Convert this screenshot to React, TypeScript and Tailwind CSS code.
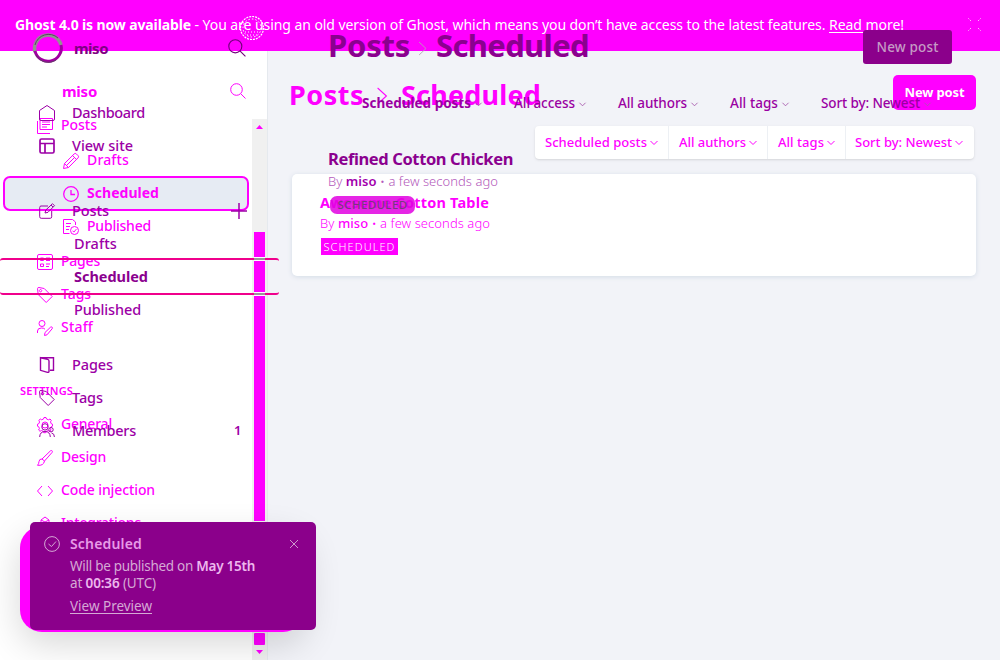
import React, { useLayoutEffect, useRef, useState } from "react";

// Text run whose tracking is adjusted so that it fills a given advance width.
function T({ w, className = "", children }: { w: number; className?: string; children: React.ReactNode }) {
  const ref = useRef<HTMLSpanElement>(null);
  const [track, setTrack] = useState(0);
  useLayoutEffect(() => {
    const el = ref.current;
    if (!el) return;
    el.style.letterSpacing = "0px";
    const natural = el.getBoundingClientRect().width;
    const value = (w - natural) / (el.textContent || " ").length;
    el.style.letterSpacing = value + "px";
    setTrack(value);
  }, [w]);
  return (
    <span ref={ref} className={"inline-block shrink-0 whitespace-pre leading-none " + className} style={{ letterSpacing: track }}>
      {children}
    </span>
  );
}

const paths: Record<string, React.ReactNode> = {
  homeFull: <path d="M.5 5.500 8 .5l7.500 5V14q0 1.500-1.500 1.500H2Q.5 15.500.5 14z" />,
  layout: <path d="M1 2.500Q1 1 2.500 1h11Q15 1 15 2.500v11q0 1.500-1.500 1.500h-11Q1 15 1 13.500zM1 5.500h14M6 5.500V15" strokeWidth="1.700" />,
  compose: <path d="M9 3H2Q.7 3 .7 4.500v9.200q0 1.600 1.500 1.600h9q1.500 0 1.500-1.500V8M6 10l.8-3L13.500.7l2 2L9 9.300zM12 2l2 2" />,
  posts: <path d="M3 .5h12.500v11H3zM.5 3v12.500H13M5 4h8M5 6.500h8M5 9h5" />,
  pencil: <path d="m.5 15.500 1-5L11.200.9q1-1 2.100 0l1.800 1.800q1 1 0 2.100L5.500 14.500zM1.500 10.500l4 4M9.500 2.500l4 4M3.500 12.500l8-8" />,
  clock: <path d="M8 .7a7.300 7.300 0 1 0 0 14.600A7.300 7.300 0 0 0 8 .7M8 4v4.500h4" strokeWidth="1.300" />,
  published: <path d="M6.500 14.500h-6V.5h9L12.500 3v3M3 4.500h5M3 7.500h4M3 10.500h3M11.500 7.500a4 4 0 1 0 0 8 4 4 0 0 0 0-8m-2 4.200 1.400 1.400 2.500-3" />,
  pages: <path d="M2 .5h12q1.500 0 1.500 1.500v12q0 1.500-1.500 1.500H2Q.5 15.500.5 14V2Q.5.500 2 .5M3.500 4h3v2.500h-3zM9 4h4M9 6.500h4M3.500 10h3v2.500h-3zM9 10h4M9 12.500h3" />,
  tag: <path d="m.5 1.500.7 6 8 8 6-6-8-8-5.200-1Q.500.500.5 1.500m3 1a1.200 1.200 0 1 0 .1 0" />,
  staff: <path d="M5 .5a3 3 0 1 0 0 6 3 3 0 0 0 0-6M.5 13V11q0-3 4-3 2.500 0 3.500 1.200M7.500 15.500l.5-3 5.500-5.300q.8-.7 1.600 0 .8.8 0 1.600L10 14.800z" />,
  book: <path d="M1.500.7h13v12.600h-3.500M1.500.7v12.600l7 2q1.500.300 1.500-1V4q0-1.200-1.500-1.600z" strokeWidth="1.400" />,
  gear: <path d="m6.500 2 .5-1.500h2L9.500 2l2 .8L13 2l1.300 1.400-.8 1.500.7 1.800 1.300.5v2l-1.400.6-.8 1.800.8 1.500-1.500 1.300-1.400-.8-2 .8-.5 1.300h-2l-.5-1.400-1.700-.8-1.500.8L1.600 13l.8-1.500-.7-1.800-1.200-.5v-2l1.400-.6.7-1.700L1.800 3.400 3.300 2l1.400.8zM8 5a3 3 0 1 0 0 6 3 3 0 0 0 0-6" />,
  members: <path d="M6 .7a3.200 3.200 0 1 0 0 6.400 3.200 3.200 0 0 0 0-6.400M.7 14q.2-5.500 5.300-5.500t5.300 5.500M12 4.500a2.200 2.200 0 1 1 0 4.400 2.200 2.200 0 0 1 0-4.400M12.500 10q3 .5 2.900 4" />,
  brush: <path d="M5 9 13.500.8q1-.6 1.600 0 .6.7 0 1.600L7.500 11zM5 9q-2.700-.2-3 2.500-.1 2.500-1.500 3.800Q6.500 16 7.500 11" />,
  code: <path d="M5 3 .5 8 5 13M11 3l4.500 5L11 13" />,
  plugin: <path d="M4 15V4l4-3 4 3v11M4 4l4 2 4-2M8 6v9" />,
  search: <path d="M6.500.7a5.800 5.800 0 1 0 0 11.600 5.800 5.800 0 0 0 0-11.600M10.800 10.800l4.700 4.700" />,
  plus: <path d="M8 0v16M0 8h16" strokeWidth="1.500" />,
  close: <path d="m0 0 16 16M16 0 0 16" strokeWidth="1.800" />,
  check: <path d="M8 .6a7.400 7.400 0 1 0 0 14.800A7.400 7.400 0 0 0 8 .6M4.500 8l3 2.500 4.500-5" />,
  down: <path d="m1 4 7 7 7-7" strokeWidth="2" />,
  right: <path d="m3 0 10 8-10 8" strokeWidth="1.200" />,
};

function Icon({ n, className = "size-4" }: { n: string; className?: string }) {
  return (
    <svg viewBox="0 0 16 16" preserveAspectRatio="none" fill="none" stroke="currentColor" strokeWidth="1" className={"shrink-0 overflow-visible " + className}>
      {paths[n]}
    </svg>
  );
}

function Item({ icon, w, label, className }: { icon: string; w: number; label: string; className: string }) {
  return (
    <div className={"flex shrink-0 items-center gap-2 " + className}>
      <Icon n={icon} />
      <T w={w} className="-mt-[2px]">{label}</T>
    </div>
  );
}

function LayerItem({ icon, w, label, className = "" }: { icon: string; w: number; label: string; className?: string }) {
  return (
    <div className={"flex h-[33px] shrink-0 items-center gap-[17px] pl-[39px] pt-px " + className}>
      <Icon n={icon} />
      <T w={w} className="-mt-px">{label}</T>
    </div>
  );
}

function Banner() {
  return (
    <header className="flex h-[51px] shrink-0 items-center bg-[#ff00ff] pb-[2px] pl-[15px] pr-[19px] text-[14px] text-white">
      <T w={176} className="font-bold">Ghost 4.0 is now available</T>
      <T w={638}>{" - You are using an old version of Ghost, which means you don’t have access to the latest features. "}</T>
      <T w={75} className="underline underline-offset-2">Read more!</T>
      <svg viewBox="0 0 13 13" className="ml-auto size-[13px] stroke-white" strokeWidth="1" strokeDasharray="1 1.500">
        <path d="m.5.500 3 3m9-3-3 3m-9 9 3-3m9 3-3-3" />
      </svg>
    </header>
  );
}

function Sidebar() {
  return (
    <aside className="flex w-[268px] shrink-0 flex-col overflow-hidden border-r border-[#e5e9ee] bg-white text-[14px] font-medium text-[#ff00ff]">
      <div className="flex h-[58px] shrink-0 items-center justify-between pl-[62px] pr-[21px] pt-[22px]">
        <T w={35} className="text-[15px] font-bold">miso</T>
        <Icon n="search" />
      </div>
      <div className="flex min-h-0 flex-1">
        <nav className="flex w-[252px] shrink-0 flex-col overflow-hidden">
          <Item icon="posts" label="Posts" w={36} className="h-[33px] pl-[37px]" />
          <Item icon="pencil" label="Drafts" w={42} className="h-[34px] pl-[63px] pt-[3px]" />
          <Item icon="clock" label="Scheduled" w={72} className="ml-[3px] mr-[3px] h-[35px] rounded-[7px] border-2 border-[#ff00ff] bg-[#e6ebf3] pl-[58px] font-bold" />
          <Item icon="published" label="Published" w={64} className="h-8 pl-[63px]" />
          <Item icon="pages" label="Pages" w={39} className="h-9 pl-[37px] pt-px" />
          <Item icon="tag" label="Tags" w={30} className="h-[31px] pl-[37px]" />
          <Item icon="staff" label="Staff" w={32} className="h-[34px] pl-[37px] pt-px" />
          <div className="flex h-16 shrink-0 items-center pl-[20px] pt-[28px] text-[11px] font-semibold">
            <T w={53}>SETTINGS</T>
          </div>
          <Item icon="gear" label="General" w={51} className="h-[33px] pl-[37px]" />
          <Item icon="brush" label="Design" w={45} className="h-[33px] pl-[37px]" />
          <Item icon="code" label="Code injection" w={94} className="h-[33px] pl-[37px]" />
          <Item icon="plugin" label="Integrations" w={80} className="h-[33px] pl-[37px]" />
        </nav>
        <div className="mt-[10px] flex w-[15px] flex-col items-center bg-[#f0f0f0]">
          <svg viewBox="0 0 7 4" className="mt-[6px] h-1 w-[7px] fill-[#ff00ff]"><path d="M0 4 3.500 0 7 4z" /></svg>
          <div className="mt-[103px] h-[289px] w-[11px] bg-[#ff00ff]" />
          <div className="mt-[112px] h-3 w-[11px] rounded-[1px] bg-[#ff00ff]" />
          <svg viewBox="0 0 7 4" className="mt-[5px] h-1 w-[7px] fill-[#ff00ff]"><path d="M0 0h7L3.500 4z" /></svg>
        </div>
      </div>
    </aside>
  );
}

function Filter({ label, w, className }: { label: string; w: number; className: string }) {
  return (
    <div className={"flex items-center border-[#edf0f4] " + className}>
      <T w={w} className="mr-[3px]">{label}</T>
      <Icon n="down" className="size-2" />
    </div>
  );
}

function Posts() {
  return (
    <main className="flex min-w-0 flex-1 flex-col bg-[#f2f3f8] pl-6 pr-6 text-[#ff00ff]">
      <div className="flex h-[83px] items-center pt-[6px]">
        <div className="-ml-[3px] -mt-[2px] flex items-center text-[27px] font-bold">
          <T w={75}>Posts</T>
          <Icon n="right" className="ml-[11px] mr-[12px] mt-[2px] h-4 w-[14px]" />
          <T w={140}>Scheduled</T>
        </div>
        <div className="ml-auto -mt-[6px] flex h-[35px] w-[83px] items-center justify-center rounded-[5px] bg-[#ff00ff] pb-px text-[13px] font-bold text-white">
          <T w={60}>New post</T>
        </div>
      </div>
      <div className="-mt-[8px] mr-[2px] flex h-[33px] w-[439px] self-end rounded-[4px] bg-white text-[13px] font-medium shadow-sm">
        <Filter label="Scheduled posts" w={102} className="w-[134px] border-r pl-[10px]" />
        <Filter label="All authors" w={67} className="w-[99px] border-r pl-[10px]" />
        <Filter label="All tags" w={46} className="w-[78px] border-r pl-[10px]" />
        <Filter label="Sort by: Newest" w={97} className="flex-1 pl-[9px]" />
      </div>
      <article className="mt-[15px] flex h-[102px] flex-col items-start rounded-[5px] bg-white pl-7 pt-[21px] shadow-[0_1px_5px_#d3dce6]">
        <T w={169} className="text-[14.500px] font-bold">Awesome Cotton Table</T>
        <T w={170} className="mt-[7px] text-[13px] font-light">By <b className="font-medium">miso</b> • a few seconds ago</T>
        <div className="ml-px mt-[8px] flex h-[17px] w-[77px] items-center justify-center bg-[#ff00ff] text-[11px] font-light text-white">
          <T w={72}>SCHEDULED</T>
        </div>
      </article>
    </main>
  );
}

function NavLayer() {
  return (
    <div className="flex w-[268px] shrink-0 flex-col text-[14.500px] font-medium text-[#9c00a6]">
      <div className="flex h-[96px] shrink-0 items-center pl-[32px] pr-[22px]">
        <svg viewBox="0 0 32 32" className="size-8" fill="none">
          <path d="M3 20A13.300 13.300 0 0 1 29 13" stroke="#929292" strokeWidth="3.500" />
          <path d="M3 19a13.300 13.300 0 0 0 26-6" stroke="#a000a0" strokeWidth="3" />
          <path d="M3 13A14 14 0 0 1 26 6M4 23a14 14 0 0 0 20 5" stroke="#5f3d65" strokeWidth="1" />
        </svg>
        <T w={34} className="ml-[10px] mt-px text-[15px] font-bold text-[#810084]">miso</T>
        <Icon n="search" className="ml-auto size-[18px] text-[#72007b]" />
      </div>
      <LayerItem icon="homeFull" label="Dashboard" w={73} />
      <LayerItem icon="layout" label="View site" w={61} />
      <div className="mt-8 flex h-[33px] shrink-0 items-center pr-[21px]">
        <LayerItem icon="compose" label="Posts" w={37} />
        <Icon n="plus" className="ml-auto size-4" />
      </div>
      <div className="flex h-[33px] shrink-0 items-center pl-[74px]"><T w={43}>Drafts</T></div>
      <div className="relative -mb-[2px] -mt-[2px] flex h-[37px] w-[279px] shrink-0 items-center rounded-[3px] border-y-2 border-[#f0008c] pl-[74px] font-bold text-[#8b008f]">
        <T w={74}>Scheduled</T>
        <span className="absolute -top-[3px] left-[254px] h-1 w-[11px] border-y border-white bg-[#999]" />
        <span className="absolute -bottom-[3px] left-[254px] h-1 w-[11px] border-y border-white bg-[#999]" />
      </div>
      <div className="flex h-[33px] shrink-0 items-center pl-[74px]"><T w={67}>Published</T></div>
      <LayerItem icon="book" label="Pages" w={41} className="mt-[22px]" />
      <LayerItem icon="tag" label="Tags" w={31} />
      <div className="flex h-[33px] shrink-0 items-center pr-[26px]">
        <LayerItem icon="members" label="Members" w={64} />
        <T w={8} className="ml-auto text-[13px] font-semibold">1</T>
      </div>
    </div>
  );
}

function LayerFilter({ label, w, className }: { label: string; w: number; className: string }) {
  return (
    <div className={"flex shrink-0 items-center gap-[5px] " + className}>
      <T w={w}>{label}</T>
      <Icon n="down" className="-ml-px size-[7px] text-[#a657ac]" />
    </div>
  );
}

function PostsLayer() {
  return (
    <div className="flex min-w-0 flex-1 flex-col text-[#9a00a2]">
      <div className="flex h-[94px] shrink-0 items-center pl-[60px] pr-12">
        <div className="-mt-[3px] flex items-center text-[31px] font-bold text-[#8b008f]">
          <T w={82}>Posts</T>
          <Icon n="right" className="ml-[7px] mr-[8px] mt-[5px] h-[13px] w-[11px] text-[#b3a0b5]" />
          <T w={153}>Scheduled</T>
        </div>
        <div className="ml-auto flex h-[34px] w-[89px] items-center justify-center rounded-[3px] bg-[#8b008b] text-[13.500px] font-medium text-[#c59bc5]">
          <T w={62} className="mt-px">New post</T>
        </div>
      </div>
      <div className="flex h-[20px] shrink-0 items-center pl-[94px] text-[13.500px] font-medium">
        <LayerFilter label="Scheduled posts" w={109} className="w-[152px] font-bold" />
        <LayerFilter label="All access" w={61} className="w-[104px]" />
        <LayerFilter label="All authors" w={69} className="w-[112px]" />
        <LayerFilter label="All tags" w={48} className="w-[91px]" />
        <LayerFilter label="Sort by: Newest" w={99} className="w-[112px]" />
      </div>
      <div className="flex flex-col items-start pl-[60px] pt-[37px]">
        <T w={185} className="text-[16.500px] font-bold text-[#8b008f]">Refined Cotton Chicken</T>
        <T w={170} className="mt-[7px] text-[13px] font-light text-[#b35abb]">By <b className="font-semibold text-[#a200ad]">miso</b> • a few seconds ago</T>
        <div className="ml-[2px] mt-[8px] flex h-[18px] w-[85px] items-center justify-center rounded-[7px] bg-[#e000e0]/85 text-[11.500px] font-medium text-[#7b387f]">
          <T w={70}>SCHEDULED</T>
        </div>
      </div>
    </div>
  );
}

function Toast() {
  return (
    <>
      <div className="absolute left-[20px] top-[526px] h-[106px] w-[285px] rounded-[22px] bg-[#ff00ff] shadow-[0_12px_36px_rgba(0,0,0,0.16)]" />
      <div className="absolute left-[30px] top-[522px] flex h-[108px] w-[286px] items-start rounded-[5px] bg-[#8b008b] pl-[14px] pr-[18px] pt-[14px] text-[13.500px] text-[#d5a9d5]">
        <Icon n="check" />
        <div className="ml-[10px] flex flex-col items-start">
          <T w={72} className="mt-px text-[14px] font-semibold text-[#e79be7]">Scheduled</T>
          <T w={185} className="mt-[9px]">Will be published on <b className="font-semibold text-[#edb8ed]">May 15th</b></T>
          <T w={86} className="mt-[3px]">at <b className="font-semibold text-[#edb8ed]">00:36</b> (UTC)</T>
          <T w={82} className="mt-[10px] underline underline-offset-2">View Preview</T>
        </div>
        <Icon n="close" className="ml-auto mt-1 size-2" />
      </div>
    </>
  );
}

export default function App() {
  return (
    <div className="relative flex h-[660px] w-[1000px] flex-col overflow-hidden bg-white font-['Noto_Sans',sans-serif]">
      <Banner />
      <div className="flex min-h-0 flex-1">
        <Sidebar />
        <Posts />
      </div>
      <div className="absolute inset-0 flex">
        <NavLayer />
        <PostsLayer />
      </div>
      <svg viewBox="0 0 26 26" fill="none" className="absolute left-[239px] top-[15px] size-[26px] stroke-white">
        <circle cx="13" cy="13" r="11.500" strokeWidth="1.200" strokeDasharray="2 1" />
        <circle cx="13" cy="13" r="9" strokeDasharray="1.500 2" />
        <path d="M6 17h14M8 20h10" strokeDasharray="1 2" />
      </svg>
      <Toast />
    </div>
  );
}
